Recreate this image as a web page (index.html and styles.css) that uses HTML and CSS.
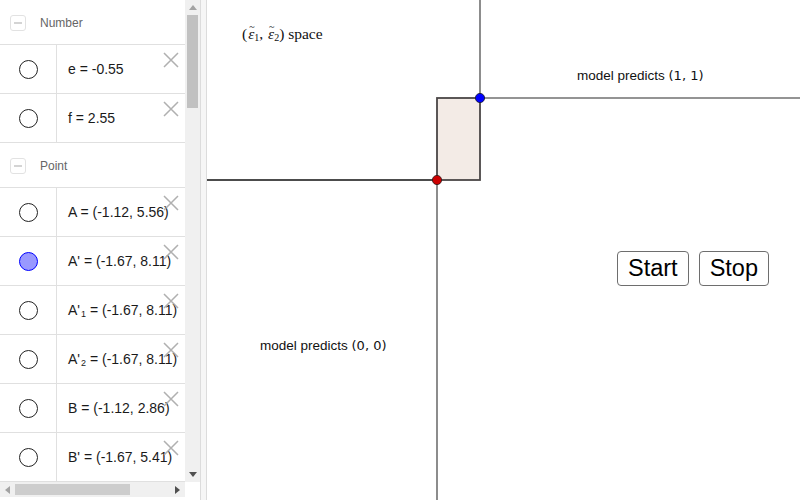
FILE: index.html
```html
<!DOCTYPE html>
<html>
<head>
<meta charset="utf-8">
<link rel="stylesheet" href="styles.css">
</head>
<body>
<div class="app">
  <aside class="sidebar">
    <div class="list">
      <div class="header first"><span class="minus"></span><span class="hlabel">Number</span></div>
      <div class="row"><div class="marble"><span class="dot"></span></div><div class="val"><span>e = -0.55</span></div><svg class="del" viewBox="0 0 16 16"><path d="M1 1L15 15M15 1L1 15"/></svg></div>
      <div class="row"><div class="marble"><span class="dot"></span></div><div class="val"><span>f = 2.55</span></div><svg class="del" viewBox="0 0 16 16"><path d="M1 1L15 15M15 1L1 15"/></svg></div>
      <div class="header"><span class="minus"></span><span class="hlabel">Point</span></div>
      <div class="row"><div class="marble"><span class="dot"></span></div><div class="val"><span>A = (-1.12, 5.56)</span></div><svg class="del" viewBox="0 0 16 16"><path d="M1 1L15 15M15 1L1 15"/></svg></div>
      <div class="row"><div class="marble"><span class="dot on"></span></div><div class="val"><span>A' = (-1.67, 8.11)</span></div><svg class="del" viewBox="0 0 16 16"><path d="M1 1L15 15M15 1L1 15"/></svg></div>
      <div class="row"><div class="marble"><span class="dot"></span></div><div class="val"><span>A'<sub>1</sub> = (-1.67, 8.11)</span></div><svg class="del" viewBox="0 0 16 16"><path d="M1 1L15 15M15 1L1 15"/></svg></div>
      <div class="row"><div class="marble"><span class="dot"></span></div><div class="val"><span>A'<sub>2</sub> = (-1.67, 8.11)</span></div><svg class="del" viewBox="0 0 16 16"><path d="M1 1L15 15M15 1L1 15"/></svg></div>
      <div class="row"><div class="marble"><span class="dot"></span></div><div class="val"><span>B = (-1.12, 2.86)</span></div><svg class="del" viewBox="0 0 16 16"><path d="M1 1L15 15M15 1L1 15"/></svg></div>
      <div class="row"><div class="marble"><span class="dot"></span></div><div class="val"><span>B' = (-1.67, 5.41)</span></div><svg class="del" viewBox="0 0 16 16"><path d="M1 1L15 15M15 1L1 15"/></svg></div>
      <div class="row"><div class="marble"><span class="dot"></span></div><div class="val"></div></div>
    </div>
    <div class="vscroll">
      <svg class="arr" viewBox="0 0 8 5"><path d="M0 5L4 0L8 5Z" fill="#a3a3a3"/></svg>
      <div class="vthumb"></div>
      <div class="vspace"></div>
      <svg class="arr" viewBox="0 0 8 5"><path d="M0 0L4 5L8 0Z" fill="#505050"/></svg>
    </div>
    <div class="hscroll">
      <svg class="harr" viewBox="0 0 5 8"><path d="M5 0L0 4L5 8Z" fill="#a3a3a3"/></svg>
      <div class="hthumb"></div>
      <div class="hspace"></div>
      <svg class="harr" viewBox="0 0 5 8"><path d="M0 0L5 4L0 8Z" fill="#505050"/></svg>
    </div>
    <div class="corner"></div>
  </aside>
  <div class="divider"></div>
  <main class="canvas">
    <svg class="geo" width="593" height="500" viewBox="0 0 593 500">
      <line x1="273" y1="0" x2="273" y2="98" stroke="#707070" stroke-width="1.6"/>
      <line x1="273" y1="98" x2="593" y2="98" stroke="#707070" stroke-width="1.6"/>
      <line x1="230" y1="180" x2="230" y2="500" stroke="#707070" stroke-width="1.6"/>
      <line x1="0" y1="180" x2="230" y2="180" stroke="#111" stroke-width="1.4"/>
      <rect x="230" y="98" width="43" height="82" fill="#f3ebe6" stroke="#4a4646" stroke-width="1.8"/>
      <circle cx="273" cy="98" r="4.6" fill="#0000ff" stroke="#1a1a3a" stroke-width="0.9"/>
      <circle cx="230" cy="180" r="4.6" fill="#cc0000" stroke="#3a1a1a" stroke-width="0.9"/>
    </svg>
    <div class="label space">(<span class="tl">ε</span><sub>1</sub>, <span class="tl">ε</span><sub>2</sub>) space</div>
    <div class="label pred11">model predicts <span class="m">(1, 1)</span></div>
    <div class="label pred00">model predicts <span class="m">(0, 0)</span></div>
    <div class="buttons">
      <button class="btn">Start</button>
      <button class="btn">Stop</button>
    </div>
  </main>
</div>
</body>
</html>
```
FILE: styles.css
```css
html, body {
  margin: 0;
  padding: 0;
  background: #fff;
}
.app {
  display: flex;
  width: 800px;
  height: 500px;
  overflow: hidden;
  font-family: "Liberation Sans", Arial, sans-serif;
}
.sidebar {
  width: 200px;
  flex: none;
  display: grid;
  grid-template-columns: 185px 15px;
  grid-template-rows: 482px 18px;
}
.list {
  overflow: hidden;
  background: #fff;
}
.header {
  height: 44px;
  display: flex;
  align-items: center;
  border-top: 1px solid #e0e0e0;
}
.header.first {
  border-top: none;
}
.minus {
  width: 14px;
  height: 14px;
  margin-left: 10px;
  border: 1px solid #e2e2e2;
  border-radius: 3px;
  position: relative;
  margin-top: 2px;
}
.minus::after {
  content: "";
  position: absolute;
  left: 3px;
  right: 3px;
  top: 6px;
  height: 2px;
  background: #d4d4d4;
}
.hlabel {
  margin-left: 14px;
  font-size: 12px;
  color: #666;
  margin-top: 1px;
}
.row {
  height: 48px;
  border-top: 1px solid #e0e0e0;
  display: flex;
  position: relative;
}
.marble {
  width: 56px;
  border-right: 1px solid #e0e0e0;
  display: flex;
  align-items: center;
  justify-content: center;
  flex: none;
}
.dot {
  width: 17px;
  height: 17px;
  border: 1.3px solid #222;
  border-radius: 50%;
  margin-left: 1px;
}
.dot.on {
  background: #9999ff;
  border-color: #0000ff;
}
.val {
  display: flex;
  align-items: center;
  padding-left: 11px;
  font-size: 14px;
  color: #1a1a1a;
  white-space: nowrap;
}
.val sub {
  font-size: 9px;
  vertical-align: -2px;
  line-height: 0;
  margin-left: 1px;
}
.del {
  position: absolute;
  right: 6px;
  top: 7px;
  width: 16px;
  height: 16px;
  fill: none;
  stroke: #a8a8a8;
  stroke-width: 1.5;
  opacity: 0.9;
}
.vscroll {
  background: #f0f0f0;
  display: flex;
  flex-direction: column;
  align-items: center;
}
.arr {
  width: 8px;
  height: 5px;
  margin: 5px 0;
  flex: none;
}
.vthumb {
  width: 11px;
  height: 93px;
  background: #c1c1c1;
  flex: none;
}
.vspace {
  flex: 1;
}
.hscroll {
  background: #f0f0f0;
  display: flex;
  align-items: center;
  height: 15px;
}
.harr {
  width: 5px;
  height: 8px;
  margin: 0 5px;
  flex: none;
}
.hthumb {
  width: 115px;
  height: 11px;
  background: #cdcdcd;
  flex: none;
}
.hspace {
  flex: 1;
}
.corner {
  background: #fff;
}
.divider {
  width: 5px;
  flex: none;
  background: #f6f6f6;
  border-left: 1px solid #dcdcdc;
  border-right: 1px solid #dcdcdc;
}
.canvas {
  flex: 1;
  position: relative;
  background: #fff;
}
.geo {
  position: absolute;
  left: 0;
  top: 0;
}
.label {
  position: absolute;
  white-space: nowrap;
  color: #111;
}
.space {
  left: 35px;
  top: 25px;
  font-family: "Liberation Serif", "DejaVu Serif", serif;
  font-size: 15.5px;
}
.tl {
  position: relative;
  font-style: italic;
  margin-left: 1px;
}
.tl::after {
  content: "~";
  position: absolute;
  left: 1px;
  top: -4px;
  font-style: normal;
  font-size: 10px;
}
.space sub {
  font-size: 10px;
  vertical-align: -2px;
  line-height: 0;
}
.pred11 {
  left: 370px;
  top: 68px;
  font-size: 13.5px;
}
.pred00 {
  left: 53px;
  top: 338px;
  font-size: 13.5px;
}
.m {
  font-family: "DejaVu Sans", sans-serif;
  font-size: 13px;
}
.buttons {
  position: absolute;
  left: 410px;
  top: 251px;
  display: flex;
  gap: 10px;
}
.btn {
  height: 35px;
  padding: 0 10px;
  font-family: "Liberation Sans", Arial, sans-serif;
  font-size: 23.5px;
  color: #000;
  background: #fff;
  border: 1px solid #6e6e6e;
  border-radius: 4px;
  line-height: 33px;
}
```
